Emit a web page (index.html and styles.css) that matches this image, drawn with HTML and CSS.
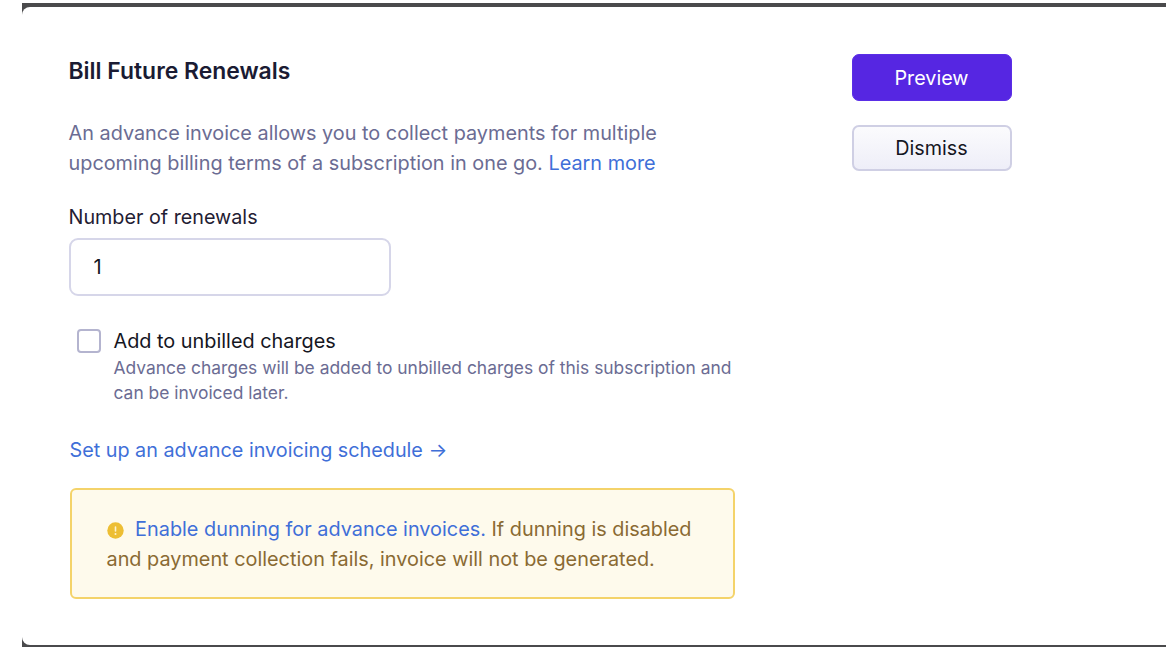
FILE: index.html
```html
<!DOCTYPE html>
<html lang="en">
<head>
<meta charset="utf-8">
<title>Bill Future Renewals</title>
<link rel="stylesheet" href="styles.css">
</head>
<body>
<div class="frame">
  <div class="card">
    <main class="main">
      <h1 class="title">Bill Future Renewals</h1>
      <p class="intro">An advance invoice allows you to collect payments for multiple upcoming billing terms of a subscription in one go. <a class="link" href="#">Learn more</a></p>
      <label class="field-label" for="renewals">Number of renewals</label>
      <input class="input" id="renewals" type="text" value="1">
      <div class="check-row">
        <span class="checkbox"></span>
        <div class="check-text">
          <div class="check-label">Add to unbilled charges</div>
          <div class="check-help">Advance charges will be added to unbilled charges of this subscription and can be invoiced later.</div>
        </div>
      </div>
      <a class="link schedule" href="#">Set up an advance invoicing schedule →</a>
      <div class="notice">
        <svg class="notice-icon" width="17" height="17" viewBox="0 0 17 17" aria-hidden="true"><circle cx="8.5" cy="8.5" r="8.2" fill="#edbe34"/><rect x="7.7" y="4.2" width="1.6" height="5.6" rx=".8" fill="#fdf3d0"/><circle cx="8.5" cy="12" r="1" fill="#fdf3d0"/></svg>
        <a class="link" href="#">Enable dunning for advance invoices.</a> If dunning is disabled and payment collection fails, invoice will not be generated.
      </div>
    </main>
    <aside class="actions">
      <button class="btn btn-primary" type="button">Preview</button>
      <button class="btn btn-secondary" type="button">Dismiss</button>
    </aside>
  </div>
</div>
</body>
</html>
```
FILE: styles.css
```css
html, body { margin: 0; height: 100%; background: #fff; overflow: hidden; }
body { font-family: Inter, "Liberation Sans", sans-serif; padding: 3px 0 0 22px; box-sizing: border-box; }
.frame { height: 644px; background: #4a4a4c; padding: 4px 0 2px; box-sizing: border-box; }
.card { height: 100%; background: #fff; border-radius: 8px 0 0 8px; display: flex; padding-left: 46.5px; }
.main { width: 666.5px; flex: none; }
.title { margin: 0; padding-top: 49px; font-size: 22.9px; line-height: 30px; font-weight: 600; color: #1a1b33; }
.intro { margin: 32px 0 0; width: 600px; font-size: 19.85px; line-height: 30px; color: #6b6c93; }
.link { color: #3f6fd8; text-decoration: none; }
.field-label { display: block; margin-top: 25px; font-size: 19.75px; line-height: 28px; color: #1f2033; }
.input { display: block; box-sizing: border-box; width: 322px; height: 58px; margin-top: 7px; padding: 0 23px; border: 2px solid #d6d6e9; border-radius: 9px; font: 20px Inter, sans-serif; color: #15161f; outline: none; }
.check-row { display: flex; margin: 31px 0 0 8.5px; }
.checkbox { flex: none; width: 24px; height: 24px; box-sizing: border-box; margin-top: 2px; border: 2px solid #b4b4cf; border-radius: 4px; }
.check-text { margin-left: 12.5px; width: 630px; }
.check-label { font-size: 19.85px; line-height: 28px; color: #15161f; }
.check-help { font-size: 17.42px; line-height: 25px; color: #6b6c93; }
.schedule { display: block; margin: 30px 0 0 1px; font-size: 19.78px; line-height: 30px; }
.notice { box-sizing: border-box; margin: 23px 0 0 1px; width: 665px; height: 111px; padding: 24px 30px 24px 35px; background: #fefaec; border: 2px solid #f4d36a; border-radius: 6px; font-size: 19.85px; line-height: 30px; color: #8a6a33; }
.notice-icon { vertical-align: -3px; margin-right: 6px; }
.actions { margin-left: 116.5px; padding-top: 47px; width: 160px; display: flex; flex-direction: column; gap: 24px; }
.btn { box-sizing: border-box; width: 160px; border-radius: 7px; font: 19.75px Inter, sans-serif; padding: 0; }
.btn-primary { height: 47px; background: #5626e2; border: 1px solid #5a2ee6; color: #fff; }
.btn-secondary { height: 46px; background: linear-gradient(#fbfbfd, #eeeef8); border: 2px solid #cfcfe4; color: #15161f; }
```
